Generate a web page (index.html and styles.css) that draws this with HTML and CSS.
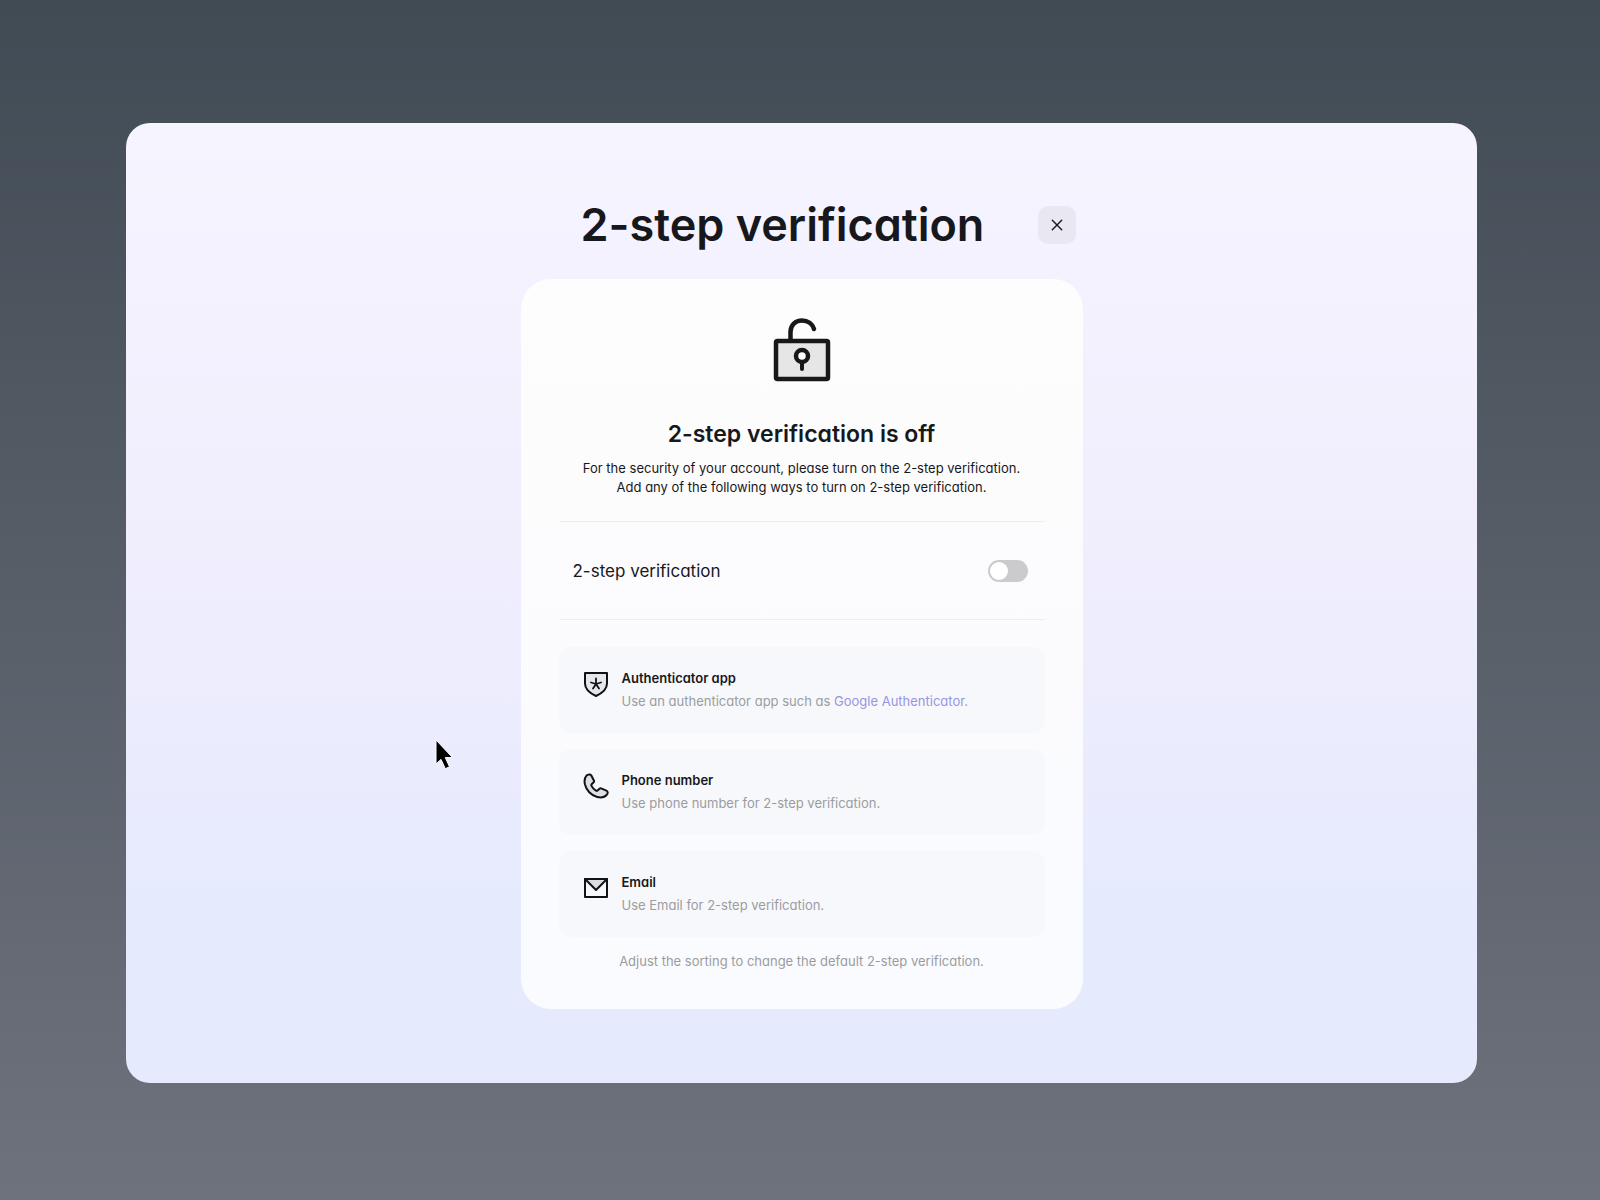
FILE: index.html
```
<!DOCTYPE html>
<html lang="en">
<head>
    <meta charset="UTF-8">
    <meta name="viewport" content="width=device-width, initial-scale=1.0">
    <title>2-step verification</title>
    <link rel="stylesheet" href="styles.css">
</head>
<body>
    <main class="panel">
        <div class="content">
            <header class="header">
                <h1>2-step verification</h1>
                <button type="button" class="close" aria-label="Close">
                    <svg width="12" height="12" viewBox="0 0 12 12" fill="none" stroke="#17181c" stroke-width="1.4" stroke-linecap="round">
                        <path d="M1.300 1.300l9.400 9.400M10.700 1.300L1.300 10.700"/>
                    </svg>
                </button>
            </header>

            <section class="card">
                <svg class="lock" width="60" height="66" viewBox="0 0 60 66" fill="none" stroke="#17181a" stroke-width="4.5" stroke-linecap="round" stroke-linejoin="round">
                    <rect x="4" y="24" width="52" height="38" rx="1.500" fill="#e6e6e6"/>
                    <path d="M18.500 23V15C18.500 8 23.500 3.500 30 3.500c6 0 10.500 3.500 12 8.500"/>
                    <circle cx="30" cy="39" r="6" fill="#fff"/>
                    <path d="M30 46v6" stroke-width="4"/>
                </svg>
                <h2>2-step verification is off</h2>
                <p class="intro">For the security of your account, please turn on the 2-step verification.<br>Add any of the following ways to turn on 2-step verification.</p>

                <div class="toggle-row">
                    <label for="twoStep">2-step verification</label>
                    <input type="checkbox" role="switch" id="twoStep" class="switch">
                </div>

                <ul class="methods">
                    <li class="method">
                        <svg width="26" height="26" viewBox="0 0 26 26" fill="none" stroke="#101216" stroke-width="2" stroke-linecap="round" stroke-linejoin="round">
                            <path d="M2 2h22v10.500c0 5.500-4.500 9.500-11 12.500C6.500 22 2 18 2 12.500z" fill="#e6e7eb"/>
                            <path d="M13 7.500v5.500M13 13l-5-1.500M13 13l5-1.500M13 13l-3 4.500M13 13l3 4.500" stroke-width="1.800"/>
                        </svg>
                        <div>
                            <h3>Authenticator app</h3>
                            <p>Use an authenticator app such as <a href="#">Google Authenticator.</a></p>
                        </div>
                    </li>
                    <li class="method">
                        <svg width="26" height="26" viewBox="0 0 26 26" fill="#dedfe2" stroke="#101216" stroke-width="2" stroke-linecap="round" stroke-linejoin="round">
                            <path d="M3.500 2.600C5 1.200 7.300.9 8.200 2.300l2.800 5.400c.3.600.1 1-.3 1.500L8.600 11.300c-.4.500-.4 1-.1 1.600 1 2 2.400 3.500 4.400 4.700.6.300 1.200.3 1.600-.1l2-1.800c.5-.4 1-.5 1.600-.3l5.300 2.300c1.500.7 1.700 2.400.5 3.900-2 2.500-5.900 3.300-9.700 2.400C8 22.500 3.300 17.200 1.900 11.300 1.200 8 1.600 4.700 3.500 2.600z"/>
                        </svg>
                        <div>
                            <h3>Phone number</h3>
                            <p>Use phone number for 2-step verification.</p>
                        </div>
                    </li>
                    <li class="method">
                        <svg width="26" height="26" viewBox="0 0 26 26" fill="none" stroke="#101216" stroke-width="2" stroke-linejoin="round">
                            <path d="M2 4h22L13 15z" fill="#dcdde0"/>
                            <rect x="2" y="4" width="22" height="18"/>
                        </svg>
                        <div>
                            <h3>Email</h3>
                            <p>Use Email for 2-step verification.</p>
                        </div>
                    </li>
                </ul>
                <p class="hint">Adjust the sorting to change the default 2-step verification.</p>
            </section>
        </div>

        <svg class="cursor" width="20" height="32" viewBox="0 0 20 32" stroke="#fff" stroke-width="1" stroke-linejoin="round">
            <path d="M1 1v24l5-4.600 4.300 9.300 4.200-1.900-4.200-9.200h7.200z"/>
        </svg>
    </main>
</body>
</html>
```
FILE: styles.css
```
* {
    box-sizing: border-box;
}
body {
    margin: 0;
    min-height: 100vh;
    padding: 123px 123px 117px 126px;
    font-family: Inter, "Liberation Sans", sans-serif;
    font-feature-settings: "cv11";
    color: #17181c;
    background: linear-gradient(#414b54, #6e727d);
}
h1, h2, h3, p {
    margin: 0;
    font-weight: 400;
}
.panel {
    position: relative;
    min-height: calc(100vh - 240px);
    padding: 74px 24px;
    border-radius: 24px;
    background: linear-gradient(#f6f4ff, #f0eefd 45%, #e5eafd 85%);
}
.content {
    max-width: 562px;
    margin: 0 auto;
}
.header {
    display: flex;
    align-items: center;
    justify-content: space-between;
    padding: 0 7px 0 60px;
    margin-bottom: 26px;
}
.header h1 {
    font-size: 45px;
    line-height: 56px;
    font-weight: 600;
}
.close {
    display: flex;
    align-items: center;
    justify-content: center;
    width: 38px;
    height: 38px;
    padding: 0;
    border: none;
    border-radius: 10px;
    background-color: #e9e7f1;
    cursor: pointer;
}
.card {
    padding: 38px;
    border-radius: 30px;
    background: linear-gradient(#fdfdfd, #fbfbfe 60%, #fafbfe);
    text-align: center;
}
.lock {
    display: block;
    margin: 0 auto 36px;
}
.card h2 {
    font-size: 23px;
    line-height: 30px;
    font-weight: 600;
}
.intro {
    margin: 10px 0 24px;
    font-size: 13px;
    line-height: 19px;
}
.toggle-row {
    display: flex;
    align-items: center;
    justify-content: space-between;
    height: 99px;
    padding: 0 17px 0 14px;
    border-top: 1px solid #eeeef1;
    border-bottom: 1px solid #eeeef1;
    font-size: 17px;
}
.switch {
    appearance: none;
    width: 40px;
    height: 22px;
    margin: 0;
    padding: 2px;
    border-radius: 11px;
    background-color: #cbcbcd;
    cursor: pointer;
}
.switch::before {
    content: "";
    display: block;
    width: 18px;
    height: 18px;
    border-radius: 50%;
    background-color: #fff;
}
.switch:checked {
    background-color: #8e8ce0;
}
.switch:checked::before {
    margin-left: auto;
}
.methods {
    display: flex;
    flex-direction: column;
    gap: 16px;
    margin: 27px 0 14px;
    padding: 0;
    list-style: none;
}
.method {
    display: flex;
    gap: 13px;
    height: 86px;
    padding: 20px 24px;
    border-radius: 12px;
    background-color: #f7f8fb;
    text-align: left;
}
.method svg {
    flex: none;
    margin-top: 4px;
}
.method h3 {
    font-size: 13px;
    line-height: 23px;
    font-weight: 600;
}
.method p {
    font-size: 13px;
    line-height: 23px;
    color: #9b9ca0;
}
.method a {
    color: #9795e2;
    text-decoration: none;
}
.hint {
    font-size: 13px;
    line-height: 20px;
    color: #9b9ca0;
}
.cursor {
    position: absolute;
    left: 309px;
    top: 616px;
}
```
